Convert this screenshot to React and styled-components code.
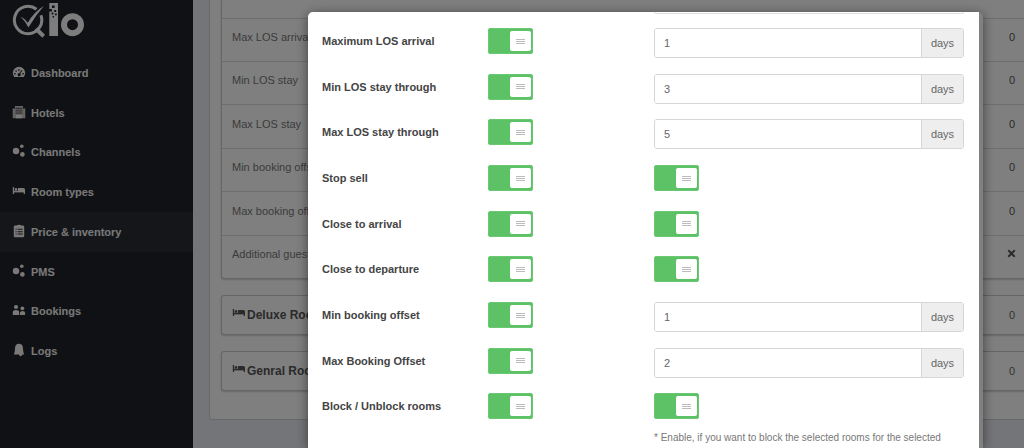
import React from 'react';
import styled, { createGlobalStyle } from 'styled-components';
import { FaTimes } from 'react-icons/fa';

const GlobalStyle = createGlobalStyle`
	* {
		box-sizing: border-box;
	}
	body {
		margin: 0;
		overflow: hidden;
		background: #e9ebf0;
		color: #666;
		font-family: 'Liberation Sans', Arial, sans-serif;
		font-size: 11px;
		line-height: 16px;
	}
`;

const Layout = styled.div`
	display: flex;
	min-height: 100vh;
`;
const SideBar = styled.aside`
	flex: 0 0 193px;
	background: #202228;
	color: #f2f2f2;
`;
const LogoLink = styled.a`
	display: block;
	padding: 2px 12px 0;
	height: 53px;
	color: #fafafa;
`;
const Nav = styled.nav`
	display: grid;
	grid-auto-rows: 1fr;
	min-height: 318px;
`;
const NavItem = styled.a`
	display: flex;
	align-items: center;
	gap: 5px;
	padding: 0 12px;
	background: ${({ $active }) => ($active ? '#2b2d35' : 'transparent')};
	color: inherit;
	font-weight: 700;
	text-decoration: none;

	svg {
		margin-bottom: 2px;
	}
`;

const Main = styled.main`
	flex: 1;
	min-width: 0;
	padding-left: 16px;
`;
const Panel = styled.section`
	display: flex;
	flex-direction: column;
	gap: 16px;
	padding: 0 0 28px 11px;
	background: #fff;
	border: 1px solid #cdd0d6;
	border-width: 0 0 1px 1px;
	border-radius: 0 0 0 3px;
`;
const RateCard = styled.div`
	border: 1px solid #ccc;
	border-width: 0 0 1px 1px;
	border-radius: 0 0 0 3px;
	box-shadow: 0 1px 2px rgba(0, 0, 0, 0.2);
`;
const RateTable = styled.table`
	width: 100%;
	height: 278px;
	border-collapse: collapse;

	th,
	td {
		padding: 0 9px 6px 10px;
		border-top: 1px solid #ddd;
		color: #777;
		font-weight: 400;
		text-align: left;
	}
	tr:first-child th,
	tr:first-child td {
		height: 18px;
		border-top: 0;
	}
	td {
		color: #555;
		text-align: right;
	}
	svg {
		display: block;
		margin: 0 -2px 0 auto;
	}
`;
const RoomCard = styled.div`
	display: flex;
	align-items: center;
	justify-content: space-between;
	height: 40px;
	padding: 0 9px 0 10px;
	border: 1px solid #ccc;
	border-right: 0;
	border-radius: 3px 0 0 3px;
	box-shadow: 0 1px 2px rgba(0, 0, 0, 0.2);
`;
const RoomName = styled.strong`
	display: flex;
	align-items: center;
	gap: 1px;
	color: #555;
	font-size: 12px;

	svg {
		margin-bottom: 4px;
	}
`;

const Backdrop = styled.div`
	position: fixed;
	inset: 0;
	padding: 12px 41px 0 308px;
	background: rgba(0, 0, 0, 0.5);
`;
const Modal = styled.div`
	min-height: 100%;
	padding-right: 4px;
	background: #808080;
	border-radius: 5px 5px 0 0;
	box-shadow: 0 2px 12px rgba(0, 0, 0, 0.5);
`;
const ModalBody = styled.form`
	min-height: 436px;
	padding: 0 15px 0 14px;
	background: #fff;
	border-radius: 5px 0 0 0;
`;
const Columns = styled.div`
	display: grid;
	grid-template-columns: 166px 166px 1fr;
`;
const PreviousField = styled.div`
	grid-column: 3;
	height: 2px;
	border: 1px solid #ddd;
	border-top: 0;
	border-radius: 0 0 3px 3px;
`;
const Rows = styled.div`
	display: grid;
	grid-auto-rows: 1fr;
	min-height: 411px;
`;
const Row = styled(Columns)`
	align-items: start;
	padding-top: 14px;
`;
const Label = styled.label`
	padding-top: 5px;
	color: #444;
	font-weight: 700;
`;
const SwitchTrack = styled.span`
	position: relative;
	display: flex;
	justify-content: flex-end;
	width: 45px;
	height: 26px;
	padding: 2px 1px 2px 2px;
	background: #5dc165;
	border: 1px solid #6ac872;
	border-radius: 2px;

	input {
		position: absolute;
		inset: 0;
		width: 100%;
		height: 100%;
		margin: 0;
		opacity: 0;
		cursor: pointer;
	}
`;
const SwitchKnob = styled.span`
	display: flex;
	align-items: center;
	justify-content: center;
	width: 21px;
	background: #fff;
	border-radius: 2px;
`;
const InputGroup = styled.div`
	display: flex;
	height: 30px;
	border: 1px solid #d6d6d6;
	border-radius: 3px;
	overflow: hidden;
`;
const DaysInput = styled.input`
	flex: 1;
	min-width: 0;
	padding: 0 9px;
	border: 0;
	color: #666;
	font: inherit;
`;
const Addon = styled.span`
	display: flex;
	align-items: center;
	justify-content: center;
	width: 42px;
	background: #eee;
	border-left: 1px solid #d6d6d6;
	color: #666;
`;
const Note = styled.p`
	grid-column: 3;
	margin: 5px 0 0;
	color: #777;
	font-size: 10px;
`;

const Icon = ({ children, height = 14 }) => (
	<svg width="14" height={height} viewBox={`0 0 14 ${height}`} fill="currentColor" aria-hidden="true">
		{children}
	</svg>
);
const DashboardIcon = () => (
	<Icon>
		<path
			fillRule="evenodd"
			d="M2.3 12A6.2 6.2 0 1 1 11.7 12ZM6.2 4.3h1.4v1.4H6.2ZM3.4 5.4h1.4v1.4H3.4ZM2.2 8h1.4v1.4H2.2ZM10.4 8h1.4v1.4h-1.4ZM9.4 5 7.4 8.3A1.5 1.5 0 1 0 8.2 8.7L10.3 5.6Z"
		/>
	</Icon>
);
const HotelIcon = () => (
	<Icon>
		<path opacity=".8" d="M3 1h8v2.5h2.3v9.8H.7V3.5H3Z" />
		<path
			d="M3 3.5h8M3 5.8h8M3 8.1h8M5 2v7M7 2v7M9 2v7"
			stroke="#202228"
			strokeWidth=".4"
			fill="none"
		/>
		<path d="M4 10h6v3.3H4Z" />
	</Icon>
);
const ChannelsIcon = () => (
	<Icon>
		<circle cx="4" cy="7" r="3.2" />
		<circle cx="9.8" cy="2.3" r="1.8" />
		<circle cx="10.4" cy="10.4" r="2.3" />
	</Icon>
);
const BedIcon = () => (
	<Icon height={10}>
		<path d="M.8 1h1.3v4.7h9.6V8H13V3.6Q13 2 11.4 2H6v2.8H2.1V8H.8Z" />
		<path d="M2.1 5h10.9v1.4H2.1Z" />
		<circle cx="4" cy="3.4" r="1.3" />
	</Icon>
);
const PriceIcon = () => (
	<Icon>
		<path
			fillRule="evenodd"
			d="M4.6 1.6Q5 .8 7 .8T9.4 1.6H11Q12.2 1.6 12.2 2.8V12Q12.2 13.2 11 13.2H3Q1.8 13.2 1.8 12V2.8Q1.8 1.6 3 1.6ZM3.6 4.8v1h1v-1ZM5.6 4.8v1h5v-1ZM3.6 7.2v1h1v-1ZM5.6 7.2v1h5v-1ZM3.6 9.6v1h1v-1ZM5.6 9.6v1h5v-1Z"
		/>
	</Icon>
);
const BookingsIcon = () => (
	<Icon>
		<circle cx="4" cy="4" r="2.1" />
		<path d="M.8 12V9.4Q.8 7 4 7T7.2 9.4V12Z" />
		<circle cx="10.4" cy="5.3" r="1.9" />
		<path d="M8 12V9.8Q8 8 10.5 8T13.1 9.8V12Z" />
	</Icon>
);
const LogsIcon = () => (
	<Icon>
		<path d="M7 .8Q11 .8 11 5.6Q11 9 12.2 11.4H1.8Q3 9 3 5.6Q3 .8 7 .8Z" />
		<path d="M7 11h3.4Q10 13.2 8.6 13.2T7 11Z" />
	</Icon>
);
const KnobLines = () => (
	<svg width="9" height="7" viewBox="0 0 9 7" aria-hidden="true">
		<path d="M0 1.5h9M0 3.5h9M0 5.5h9" stroke="#bbb" />
	</svg>
);
const Logo = () => (
	<svg width="73" height="38" viewBox="0 0 73 38" role="img" aria-label="Qlo">
		<path
			d="M24.5 7.2A13.7 13.7 0 1 0 28.9 13.2"
			fill="none"
			stroke="currentColor"
			strokeWidth="3"
		/>
		<path d="M25.5 25.3l7.5 7.5-2.6 3-8-7.6Z" fill="currentColor" />
		<path d="M8.5 14.5q4 1.8 7.3 6.2Q22 9.8 31.8 4 24 13 16.4 25.5 13 19 8.5 14.5Z" fill="currentColor" />
		<path
			fillRule="evenodd"
			d="M37.3 1H46v33h-8.7ZM40 3.5v2.6h2.6V3.5ZM37.3 7v2.6h2.6V7ZM42.2 8v2h2V8ZM39.6 10.6v1.8h1.8v-1.8ZM43 11.5v1.8h1.8v-1.8ZM40.6 14v1.5h1.5V14Z"
			fill="currentColor"
		/>
		<circle cx="60.5" cy="22.7" r="8.5" fill="none" stroke="currentColor" strokeWidth="6" />
	</svg>
);

const navItems = [
	{ name: 'Dashboard', icon: DashboardIcon },
	{ name: 'Hotels', icon: HotelIcon },
	{ name: 'Channels', icon: ChannelsIcon },
	{ name: 'Room types', icon: BedIcon },
	{ name: 'Price & inventory', icon: PriceIcon, active: true },
	{ name: 'PMS', icon: ChannelsIcon },
	{ name: 'Bookings', icon: BookingsIcon },
	{ name: 'Logs', icon: LogsIcon },
];

const rates = [
	'Max LOS arrival',
	'Min LOS stay',
	'Max LOS stay',
	'Min booking offset',
	'Max booking offset',
	'Additional guest',
];

const fields = [
	{ id: 'max-los-arrival', label: 'Maximum LOS arrival', days: '1' },
	{ id: 'min-los-stay', label: 'Min LOS stay through', days: '3' },
	{ id: 'max-los-stay', label: 'Max LOS stay through', days: '5' },
	{ id: 'stop-sell', label: 'Stop sell' },
	{ id: 'close-arrival', label: 'Close to arrival' },
	{ id: 'close-departure', label: 'Close to departure' },
	{ id: 'min-offset', label: 'Min booking offset', days: '1' },
	{ id: 'max-offset', label: 'Max Booking Offset', days: '2' },
	{ id: 'block-rooms', label: 'Block / Unblock rooms' },
];

const Switch = ({ id, label }) => (
	<SwitchTrack>
		<SwitchKnob>
			<KnobLines />
		</SwitchKnob>
		<input type="checkbox" id={id} aria-label={label} defaultChecked />
	</SwitchTrack>
);

const Field = ({ id, label, days }) => (
	<Row>
		<Label htmlFor={id}>{label}</Label>
		<Switch id={id} />
		{days ? (
			<InputGroup>
				<DaysInput type="text" defaultValue={days} aria-label={label} />
				<Addon>days</Addon>
			</InputGroup>
		) : (
			<Switch id={`${id}-value`} label={label} />
		)}
	</Row>
);

const App = () => (
	<>
		<GlobalStyle />
		<Layout>
			<SideBar>
				<LogoLink href="#">
					<Logo />
				</LogoLink>
				<Nav>
					{navItems.map(({ name, icon: NavIcon, active }) => (
						<NavItem key={name} href="#" $active={active}>
							<NavIcon />
							{name}
						</NavItem>
					))}
				</Nav>
			</SideBar>
			<Main>
				<Panel>
					<RateCard>
						<RateTable>
							<tbody>
								<tr>
									<th />
									<td />
								</tr>
								{rates.map((rate) => (
									<tr key={rate}>
										<th scope="row">{rate}</th>
										<td>{rate === 'Additional guest' ? <FaTimes size={11} /> : '0'}</td>
									</tr>
								))}
							</tbody>
						</RateTable>
					</RateCard>
					{['Deluxe Rooms', 'Genral Rooms'].map((room) => (
						<RoomCard key={room}>
							<RoomName>
								<BedIcon />
								{room}
							</RoomName>
							<span>0</span>
						</RoomCard>
					))}
				</Panel>
			</Main>
		</Layout>
		<Backdrop>
			<Modal role="dialog" aria-label="Price & inventory">
				<ModalBody>
					<Columns>
						<PreviousField />
					</Columns>
					<Rows>
						{fields.map((field) => (
							<Field key={field.id} {...field} />
						))}
					</Rows>
					<Columns>
						<Note>* Enable, if you want to block the selected rooms for the selected</Note>
					</Columns>
				</ModalBody>
			</Modal>
		</Backdrop>
	</>
);

export default App;
